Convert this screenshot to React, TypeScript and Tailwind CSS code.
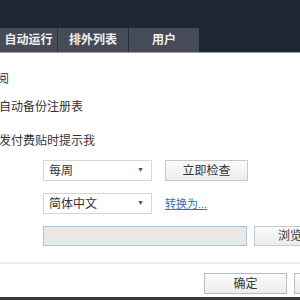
export default function App() {
  const font = { fontFamily: '"Liberation Sans", "Noto Sans CJK SC", sans-serif' };
  return (
    <div className="w-[300px] h-[300px] overflow-hidden bg-white flex flex-col text-[12px] text-[#333]" style={font}>
      {/* header with tabs */}
      <div className="h-[53px] bg-[#1f2633] flex flex-col justify-end shrink-0">
        <div className="flex h-[25px] border-b border-[#9aa0a8]">
          <div className="w-[58px] bg-[#454b57] text-[#f0f0f0] font-bold flex items-center justify-center border-r border-[#2a303b]">自动运行</div>
          <div className="w-[71px] bg-[#454b57] text-[#f0f0f0] font-bold flex items-center justify-center border-r border-[#2a303b]">排外列表</div>
          <div className="w-[70px] bg-[#454b57] text-[#f0f0f0] font-bold flex items-center justify-center">用户</div>
        </div>
      </div>

      {/* body */}
      <div className="flex flex-col pt-[18px]">
        <div className="ml-[-3px] h-[16px] leading-[16px]">阅</div>
        <div className="mt-[12px] ml-[-1px] h-[16px] leading-[16px]">自动备份注册表</div>
        <div className="mt-[18px] ml-[-1px] h-[16px] leading-[16px]">发付费贴时提示我</div>

        <div className="mt-[11px] ml-[43px] flex items-center gap-[13px]">
          <div className="w-[109px] h-[21px] border border-[#d6d6d6] flex items-center justify-between pl-[5px] pr-[7px] shrink-0">
            <span>每周</span>
            <span className="text-[7px] text-[#555]">▼</span>
          </div>
          <div className="w-[83px] h-[21px] border border-[#c8c8c8] bg-gradient-to-b from-[#fbfbfb] to-[#ececec] flex items-center justify-center shrink-0">立即检查</div>
        </div>

        <div className="mt-[12px] ml-[43px] flex items-center gap-[13px]">
          <div className="w-[109px] h-[21px] border border-[#d6d6d6] flex items-center justify-between pl-[5px] pr-[7px] shrink-0">
            <span>简体中文</span>
            <span className="text-[7px] text-[#555]">▼</span>
          </div>
          <span className="text-[#3b6ea8] underline text-[11px] mt-[2px]">转换为...</span>
        </div>

        <div className="mt-[12px] ml-[43px] flex items-center gap-[7px]">
          <div className="w-[204px] h-[20px] border border-[#a9c4d6] bg-[#e8e8e8] shrink-0" />
          <div className="w-[60px] h-[20px] border border-[#c8c8c8] bg-gradient-to-b from-[#fbfbfb] to-[#ececec] flex items-center pl-[23px] shrink-0">浏览</div>
        </div>
      </div>

      <div className="mt-[16px] h-[2px] bg-[#eeeeee] shrink-0" />
      <div className="flex-1 flex items-start justify-end gap-[7px] pt-[9px] mr-[-10px]">
        <div className="w-[83px] h-[21px] border border-[#b8bcc0] bg-gradient-to-b from-[#fbfbfb] to-[#ececec] flex items-center justify-center shrink-0">确定</div>
        <div className="w-[16px] h-[21px] border border-[#b8bcc0] bg-gradient-to-b from-[#fbfbfb] to-[#ececec] shrink-0" />
      </div>
      <div className="h-[3px] bg-[#3a3a3a] shrink-0" />
    </div>
  );
}
